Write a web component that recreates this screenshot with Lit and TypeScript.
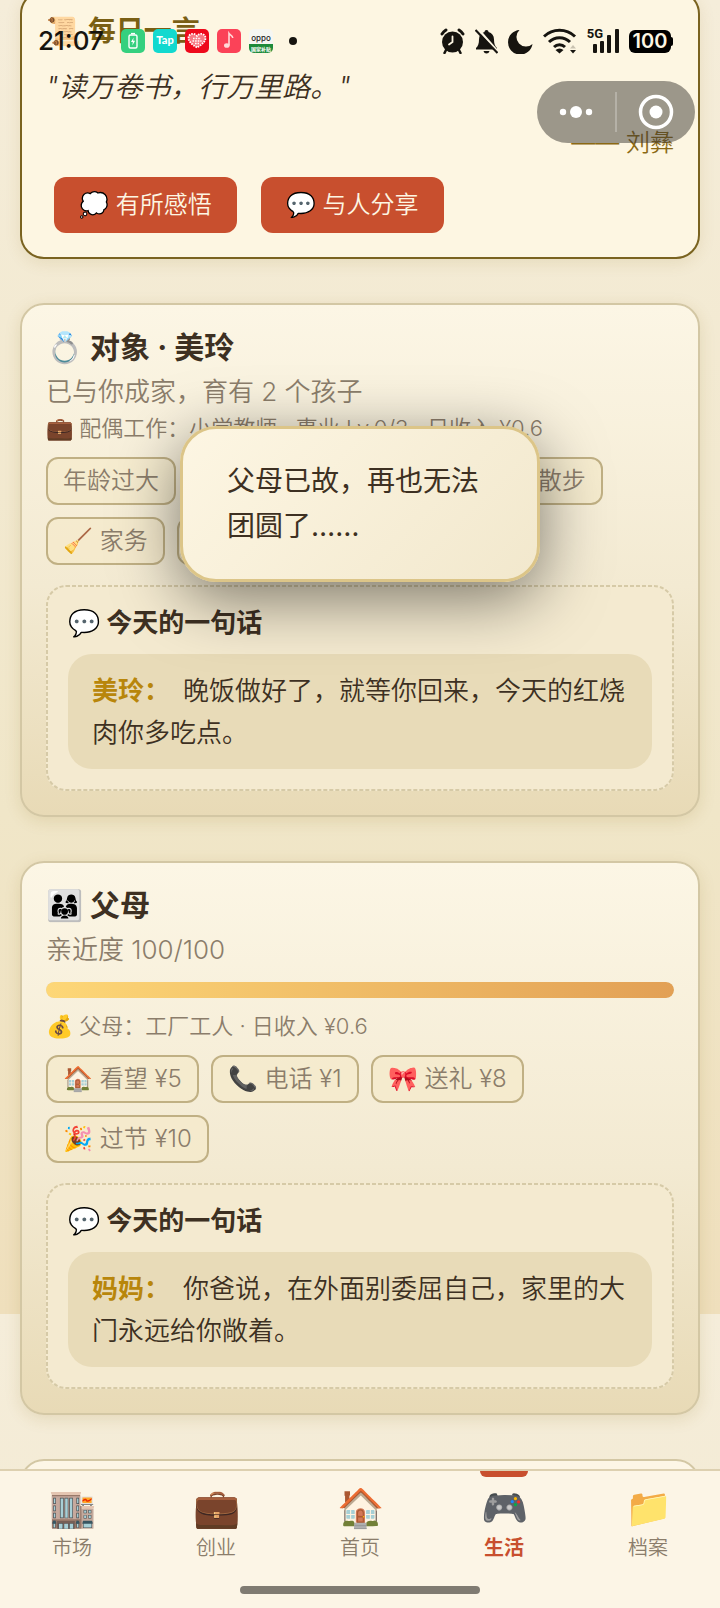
import { LitElement, html, css } from 'lit'
import { classMap } from 'lit/directives/class-map.js'
import { styleMap } from 'lit/directives/style-map.js'

export class StatusBar extends LitElement {
	static styles = css`
		:host {
			position: absolute;
			top: 0;
			left: 0;
			right: 0;
			z-index: 3;
			display: flex;
			align-items: center;
			justify-content: space-between;
			padding: 28px 47px 0 38px;
			color: #16140f;
			pointer-events: none;
		}
		.group {
			display: flex;
			align-items: center;
			height: 26px;
		}
		.apps {
			gap: 8px;
		}
		.system {
			gap: 10px;
		}
		.time {
			width: 75px;
			font-family: Inter, sans-serif;
			font-size: 26px;
			font-weight: 500;
			line-height: 26px;
		}
		svg {
			display: block;
		}
		.dot {
			width: 8px;
			height: 8px;
			margin-left: 8px;
			border-radius: 50%;
			background: #16140f;
		}
		.network {
			display: flex;
		}
		.network span {
			font-family: Roboto, sans-serif;
			font-size: 13px;
			font-weight: 700;
			line-height: 12px;
		}
		.network svg {
			margin-left: -10px;
		}
		.battery {
			display: flex;
			align-items: center;
		}
		.battery span {
			width: 42px;
			border-radius: 6px;
			background: #000;
			color: #fdf6e3;
			font-family: Inter, sans-serif;
			font-size: 20px;
			font-weight: 600;
			line-height: 23px;
			text-align: center;
		}
		.battery i {
			width: 2px;
			height: 9px;
			border-radius: 0 2px 2px 0;
			background: #000;
		}
	`

	render() {
		return html`
			<div class="group apps">
				<span class="time">21:07</span>
				<svg width="24" height="24" viewBox="0 0 24 24">
					<rect width="24" height="24" rx="5" fill="#35d07f" />
					<rect x="8" y="6" width="8" height="13" rx="1.5" fill="none" stroke="#fff" stroke-width="1.4" />
					<path d="M10 4.6h4" stroke="#fff" stroke-width="1.4" />
					<path d="M12.6 8.5 10 13h1.8l-.5 3.6 2.8-4.8h-1.9z" fill="#fff" />
				</svg>
				<svg width="24" height="24" viewBox="0 0 24 24">
					<rect width="24" height="24" rx="5" fill="#12d9cf" />
					<text x="12" y="15" font-family="Lato, sans-serif" font-size="11" font-weight="900" fill="#fff" text-anchor="middle">Tap</text>
				</svg>
				<svg width="24" height="24" viewBox="0 0 24 24">
					<rect width="24" height="24" rx="5" fill="#ee0a1c" />
					<path d="M12 18.5C6 15 3.5 12 3.5 9c0-4.5 6-5.5 8.5-2 2.5-3.5 8.5-2.5 8.5 2 0 3-2.5 6-8.5 9.5z" fill="#f77a84" stroke="#fff" stroke-width="1.8" stroke-dasharray="1.6 1" />
					<path d="M8 9.5h8M7.5 12h9M10 14.5h4" stroke="#fff" stroke-width="1.4" stroke-dasharray="1.6 1" />
				</svg>
				<svg width="24" height="24" viewBox="0 0 24 24">
					<rect width="24" height="24" rx="5" fill="#fb4258" />
					<ellipse cx="9.8" cy="16.5" rx="2.8" ry="2.3" fill="#ffd9d9" />
					<path d="M12 16.5v-12c1 1.5 3.5 1.8 3.8 4.5" fill="none" stroke="#ffd9d9" stroke-width="1.6" />
				</svg>
				<svg width="24" height="24" viewBox="0 0 24 24">
					<path d="M0 15h24v4a5 5 0 0 1-5 5H5a5 5 0 0 1-5-5z" fill="#1d8a3a" />
					<path d="M5 0h14a5 5 0 0 1 5 5v10H0V5a5 5 0 0 1 5-5z" fill="#f6f6f2" />
					<text x="12" y="11.5" font-family="Inter, sans-serif" font-size="8" font-weight="500" fill="#222" text-anchor="middle">oppo</text>
					<text x="12" y="21.5" font-family="'Noto Sans CJK SC', sans-serif" font-size="5" font-weight="700" fill="#fff" text-anchor="middle">国家补贴</text>
				</svg>
				<span class="dot"></span>
			</div>
			<div class="group system">
				<svg width="25" height="26" viewBox="0 0 25 26" fill="currentColor">
					<circle cx="12.5" cy="14" r="10.5" />
					<path d="M2 6a14 14 0 0 1 4-4M23 6a14 14 0 0 0-4-4" fill="none" stroke="currentColor" stroke-width="3" stroke-linecap="round" />
					<path d="m6 22-1.5 3M19 22l1.5 3" stroke="currentColor" stroke-width="2.5" stroke-linecap="round" />
					<path d="M12.5 8.5V14L9 16.5" fill="none" stroke="#fdf6e3" stroke-width="1.8" stroke-linecap="round" />
				</svg>
				<svg width="23" height="26" viewBox="0 0 23 26">
					<path d="M11.5 2c1.2 0 2 .8 2 2 3.5 1 5.5 3.7 5.5 7.5 0 4 .8 6.5 3 8.5v1.5H1V20c2.2-2 3-4.5 3-8.5C4 7.7 6 5 9.5 4c0-1.2.8-2 2-2zM8.5 23h6c-.5 1.7-1.5 2.5-3 2.5s-2.5-.8-3-2.5z" fill="currentColor" />
					<path d="m2.5.5 21 24" stroke="#fdf6e3" stroke-width="2.5" />
					<path d="m.5 2 22 23" stroke="currentColor" stroke-width="2.2" />
				</svg>
				<svg width="25" height="25" viewBox="0 0 25 25">
					<path d="M11.5 1A9.5 9.5 0 0 0 24.5 15 12.3 12.3 0 1 1 11.5 1z" fill="currentColor" />
				</svg>
				<svg width="34" height="26" viewBox="0 0 34 26" fill="none" stroke="currentColor" stroke-width="3">
					<path d="M1 8.5a22.5 22.5 0 0 1 31 0" />
					<path d="M6 14a15 15 0 0 1 21 0" />
					<path d="M11 19a8 8 0 0 1 11 0" />
					<path d="M16.5 25.5 12.5 22a6 6 0 0 1 8 0z" fill="currentColor" stroke="none" />
					<path d="M27 20.5h6l-3-3.5z" fill="#c9c2b0" stroke="none" />
					<path d="M27 22h6l-3 3.5z" fill="currentColor" stroke="none" />
				</svg>
				<div class="network">
					<span>5G</span>
					<svg width="26" height="26" viewBox="0 0 26 26" fill="currentColor">
						<rect y="16" width="4" height="9" rx="1" />
						<rect x="7" y="13" width="4" height="12" rx="1" />
						<rect x="14" y="7" width="4" height="18" rx="1" />
						<rect x="22" y="1" width="4" height="24" rx="1" />
					</svg>
				</div>
				<div class="battery"><span>100</span><i></i></div>
			</div>
		`
	}
}

customElements.define('status-bar', StatusBar)

export class DailyQuote extends LitElement {
	static styles = css`
		:host {
			display: block;
			padding: 24px;
			border: 2px solid #7a6320;
			border-radius: 24px;
			background: #fdf6e2;
			box-shadow: 0 4px 16px rgba(139, 105, 20, 0.12);
		}
		h2,
		p {
			margin: 0;
		}
		h2 {
			color: #7a5f14;
			font-size: 28px;
			font-weight: 700;
			line-height: 30px;
		}
		.quote {
			margin-top: 19px;
			font-size: 28px;
			font-style: italic;
			line-height: 44px;
		}
		.author {
			margin-top: 18px;
			color: #8b6914;
			font-size: 24px;
			line-height: 32px;
			text-align: right;
		}
		.actions {
			display: flex;
			gap: 24px;
			margin-top: 18px;
			padding: 0 8px;
		}
		button {
			height: 56px;
			padding: 0 25px;
			border: none;
			border-radius: 12px;
			background: #c84f2e;
			color: #fdf6e3;
			font: inherit;
			font-size: 24px;
			line-height: 32px;
			cursor: pointer;
		}
	`

	render() {
		return html`
			<h2>📜 每日一言</h2>
			<p class="quote">"读万卷书，行万里路。"</p>
			<p class="author">—— 刘彝</p>
			<div class="actions">
				<button>💭 有所感悟</button>
				<button>💬 与人分享</button>
			</div>
		`
	}
}

customElements.define('daily-quote', DailyQuote)

export class RelationCard extends LitElement {
	heading: string
	summary: string
	detail: string
	progress: number | null
	actions: string[]
	speaker: string
	words: string

	static get properties() {
		return {
			heading: { type: String },
			summary: { type: String },
			detail: { type: String },
			progress: { type: Number },
			actions: { type: Array },
			speaker: { type: String },
			words: { type: String },
		}
	}

	constructor() {
		super()
		this.heading = ''
		this.summary = ''
		this.detail = ''
		this.progress = null
		this.actions = []
		this.speaker = ''
		this.words = ''
	}

	static styles = css`
		:host {
			display: block;
			padding: 24px;
			border: 2px solid #d3c7a4;
			border-radius: 24px;
			background: linear-gradient(180deg, #fcf6e5 0%, #f3ead2 55%, #e8dab6 100%);
			box-shadow: 0 4px 16px rgba(139, 105, 20, 0.15);
		}
		h2,
		h3,
		p {
			margin: 0;
		}
		h2 {
			font-size: 30px;
			font-weight: 700;
			line-height: 36px;
		}
		.summary {
			margin-top: 6px;
			color: #8b7d6b;
			font-size: 26px;
			line-height: 41px;
		}
		.track {
			height: 16px;
			margin: 12px 0;
			border-radius: 8px;
			background: #e8dab6;
			overflow: hidden;
		}
		.fill {
			height: 100%;
			border-radius: 8px;
			background: linear-gradient(90deg, #fdd777, #e2a055);
		}
		.detail {
			color: #8b7d6b;
			font-size: 22px;
			line-height: 32px;
		}
		.actions {
			display: flex;
			flex-wrap: wrap;
			gap: 12px;
			margin: 13px 0 20px;
		}
		button {
			height: 48px;
			padding: 0 15px;
			border: 2px solid #c0b084;
			border-radius: 12px;
			background: rgba(245, 233, 200, 0.6);
			color: #8b7d6b;
			font: inherit;
			font-size: 24px;
			line-height: 32px;
			cursor: pointer;
		}
		.talk {
			position: relative;
			padding: 18px 22px 22px;
			border-radius: 20px;
			background: #f4ead0;
		}
		.outline {
			position: absolute;
			inset: 0;
			width: 100%;
			height: 100%;
			pointer-events: none;
		}
		.outline rect {
			width: calc(100% - 2px);
			height: calc(100% - 2px);
			fill: none;
			stroke: #d6caa7;
			stroke-width: 2px;
			stroke-dasharray: 4 2;
		}
		h3 {
			font-size: 26px;
			font-weight: 700;
			line-height: 40px;
		}
		.bubble {
			margin-top: 11px;
			padding: 16px 24px 15px;
			border-radius: 24px;
			background: #e8dbb8;
			font-size: 26px;
			line-height: 42px;
		}
		.speaker {
			margin-right: 13px;
			color: #b8860b;
			font-weight: 700;
		}
	`

	render() {
		return html`
			<h2>${this.heading}</h2>
			<p class="summary">${this.summary}</p>
			${this.progress === null
				? ''
				: html`<div class="track">
						<div class="fill" style=${styleMap({ width: `${this.progress}%` })}></div>
					</div>`}
			<p class="detail">${this.detail}</p>
			<div class="actions">${this.actions.map((action) => html`<button>${action}</button>`)}</div>
			<section class="talk">
				<svg class="outline"><rect x="1" y="1" rx="19" /></svg>
				<h3>💬 今天的一句话</h3>
				<p class="bubble"><span class="speaker">${this.speaker}：</span>${this.words}</p>
			</section>
		`
	}
}

customElements.define('relation-card', RelationCard)

export class TabBar extends LitElement {
	_active: string

	static get properties() {
		return {
			_active: { state: true },
		}
	}

	constructor() {
		super()
		this._active = '生活'
	}

	static styles = css`
		:host {
			display: block;
			position: relative;
			z-index: 1;
			border-top: 2px solid #ddd0b0;
			background: #fcf5e6;
		}
		nav {
			display: grid;
			grid-template-columns: repeat(5, 1fr);
		}
		button {
			display: flex;
			flex-direction: column;
			align-items: center;
			padding: 0;
			border: none;
			background: none;
			color: #8b7d6b;
			font: inherit;
			font-size: 20px;
			line-height: 26px;
			cursor: pointer;
		}
		.marker {
			width: 48px;
			height: 6px;
			border-radius: 0 0 6px 6px;
		}
		.icon {
			margin: 6px 0 4px;
			font-size: 38px;
			line-height: 48px;
		}
		.active {
			color: #c84f2e;
			font-weight: 700;
		}
		.active .marker {
			background: #c84f2e;
		}
		.home {
			width: 240px;
			height: 8px;
			margin: 25px auto 14px;
			border-radius: 4px;
			background: #807b72;
		}
	`

	_tabs = [
		['🏬', '市场'],
		['💼', '创业'],
		['🏠', '首页'],
		['🎮', '生活'],
		['📁', '档案'],
	]

	render() {
		return html`
			<nav>
				${this._tabs.map(
					([icon, label]) => html`
						<button class=${classMap({ active: label === this._active })} @click=${() => (this._active = label)}>
							<span class="marker"></span>
							<span class="icon">${icon}</span>
							<span>${label}</span>
						</button>
					`
				)}
			</nav>
			<div class="home"></div>
		`
	}
}

customElements.define('tab-bar', TabBar)

export class AppRoot extends LitElement {
	static styles = css`
		:host {
			display: flex;
			flex-direction: column;
			position: relative;
			height: 100vh;
			overflow: hidden;
			color: #3d3022;
			font-family: Inter, 'Noto Sans CJK SC', sans-serif;
			font-weight: 350;
		}
		main {
			display: flex;
			flex: 1;
			flex-direction: column;
			gap: 44px;
			min-height: 0;
			padding: 0 20px;
			overflow: hidden;
			background: linear-gradient(180deg, #f5edda 0%, #f0e6c8 62%, #efdfbc 100%) 0 0 / 100% 1314px;
		}
		main > * {
			flex-shrink: 0;
		}
		/* the list is scrolled a little past the first card's top edge */
		daily-quote {
			margin-top: -10px;
		}
		.next {
			height: 60px;
			border: 2px solid #d3c7a4;
			border-radius: 24px;
			background: #fdf6e6;
		}
		.capsule {
			position: absolute;
			top: 81px;
			right: 25px;
			z-index: 3;
			display: flex;
			align-items: center;
			height: 62px;
			border-radius: 31px;
			background: rgba(60, 55, 50, 0.5);
		}
		.capsule button {
			display: flex;
			align-items: center;
			justify-content: center;
			width: 78px;
			height: 40px;
			padding: 0;
			border: none;
			background: none;
			cursor: pointer;
		}
		.capsule button + button {
			width: 80px;
			border-left: 2px solid rgba(255, 255, 255, 0.25);
		}
		.toast {
			position: absolute;
			top: 426px;
			left: 50%;
			z-index: 2;
			box-sizing: border-box;
			width: 50%;
			padding: 30px 44px;
			border: 3px solid #dcc588;
			border-radius: 36px;
			background: linear-gradient(135deg, #fdf6e3, #f2e8cd);
			box-shadow: 0 16px 64px rgba(0, 0, 0, 0.5);
			font-size: 28px;
			font-weight: 400;
			line-height: 45px;
			transform: translateX(-50%);
		}
	`

	render() {
		return html`
			<main>
				<daily-quote></daily-quote>
				<relation-card
					heading="💍 对象 · 美玲"
					summary="已与你成家，育有 2 个孩子"
					detail="💼 配偶工作：小学教师 · 事业 Lv.0/3 · 日收入 ¥0.6"
					.actions=${['年龄过大', '💬 聊天', '🎁 送礼 ¥8', '🚶 散步', '🧹 家务', '🏠 团圆']}
					speaker="美玲"
					words="晚饭做好了，就等你回来，今天的红烧肉你多吃点。"
				></relation-card>
				<relation-card
					heading="👨‍👩‍👧 父母"
					summary="亲近度 100/100"
					progress="100"
					detail="💰 父母：工厂工人 · 日收入 ¥0.6"
					.actions=${['🏠 看望 ¥5', '📞 电话 ¥1', '🎀 送礼 ¥8', '🎉 过节 ¥10']}
					speaker="妈妈"
					words="你爸说，在外面别委屈自己，家里的大门永远给你敞着。"
				></relation-card>
				<div class="next"></div>
			</main>
			<tab-bar></tab-bar>
			<status-bar></status-bar>
			<div class="capsule">
				<button aria-label="更多">
					<svg width="34" height="12" viewBox="0 0 34 12" fill="#fff">
						<circle cx="4" cy="6" r="3.2" />
						<circle cx="17" cy="6" r="6" />
						<circle cx="30" cy="6" r="3.2" />
					</svg>
				</button>
				<button aria-label="关闭">
					<svg width="36" height="36" viewBox="0 0 36 36">
						<circle cx="18" cy="18" r="15.5" fill="none" stroke="#fff" stroke-width="3.5" />
						<circle cx="18" cy="18" r="6.5" fill="#fff" />
					</svg>
				</button>
			</div>
			<div class="toast" role="alert">父母已故，再也无法团圆了……</div>
		`
	}
}

customElements.define('app-root', AppRoot)
